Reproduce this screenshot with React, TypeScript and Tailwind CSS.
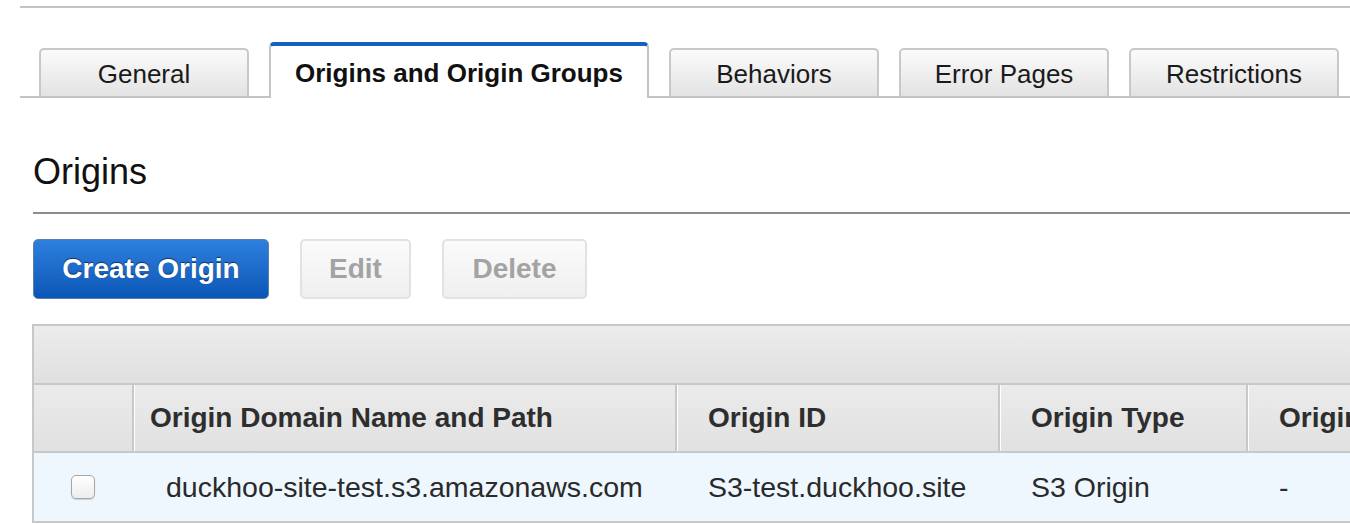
const tabs = [
  { label: 'General', active: false, width: 'w-[210px]' },
  { label: 'Origins and Origin Groups', active: true, width: 'w-[380px]' },
  { label: 'Behaviors', active: false, width: 'w-[210px]' },
  { label: 'Error Pages', active: false, width: 'w-[210px]' },
  { label: 'Restrictions', active: false, width: 'w-[210px]' },
];

function Tab({ label, active, width }: { label: string; active: boolean; width: string }) {
  if (active) {
    return (
      <div
        className={`${width} -mb-[2px] flex h-[56px] items-center justify-center rounded-t-[5px] border-x-2 border-t-4 border-x-[#c4c4c4] border-t-[#1461c0] bg-white pt-[2px] text-[26px] font-bold text-[#111]`}
      >
        {label}
      </div>
    );
  }
  return (
    <div
      className={`${width} flex h-[48px] items-center justify-center rounded-t-[5px] border-x-2 border-t-2 border-[#c8c8c8] bg-gradient-to-b from-[#fbfbfb] to-[#e3e3e3] pt-[2px] text-[26px] text-[#1a1a1a]`}
    >
      {label}
    </div>
  );
}

const cols = [
  { key: 'check', width: 'w-[98px]' },
  { key: 'domain', width: 'w-[543px]', head: 'Origin Domain Name and Path', headPad: 'pl-[16px]' },
  { key: 'id', width: 'w-[323px]', head: 'Origin ID', headPad: 'pl-[31px]' },
  { key: 'type', width: 'w-[248px]', head: 'Origin Type', headPad: 'pl-[31px]' },
  { key: 'path', width: 'w-[320px]', head: 'Origin Path', headPad: 'pl-[31px]' },
];

export default function App() {
  return (
    <div className="h-[524px] w-[1350px] overflow-hidden bg-white font-['Liberation_Sans',Arial,sans-serif]">
      <div className="pl-[20px] pt-[6px]">
        <div className="h-[2px] bg-[#c4c4c4]" />

        {/* Tab strip */}
        <div className="mt-[34px] flex items-end gap-[20px] border-b-2 border-[#c4c4c4] pl-[19px]">
          {tabs.map((t) => (
            <Tab key={t.label} {...t} />
          ))}
        </div>

        <div className="pl-[12px]">
          <h2 className="mt-[54px] pl-[1px] text-[36px] leading-[40px] text-[#111]">Origins</h2>
          <div className="ml-[1px] mt-[20px] h-[2px] bg-[#8c8c8c]" />

          {/* Actions */}
          <div className="mt-[25px] flex gap-[31px] pl-[1px]">
            <button className="h-[60px] w-[236px] rounded-[5px] border border-[#5f7ea6] bg-gradient-to-b from-[#2e80de] to-[#0a56b6] text-[28px] font-bold text-white [text-shadow:0_-1px_1px_rgba(0,0,0,0.55)]">
              Create Origin
            </button>
            <button className="h-[60px] w-[111px] rounded-[5px] border-2 border-[#e2e2e2] bg-gradient-to-b from-[#fbfbfb] to-[#efefef] text-[28px] font-bold text-[#a3a3a3]">
              Edit
            </button>
            <button className="h-[60px] w-[145px] rounded-[5px] border-2 border-[#e2e2e2] bg-gradient-to-b from-[#fbfbfb] to-[#efefef] text-[28px] font-bold text-[#a3a3a3]">
              Delete
            </button>
          </div>

          {/* Origins table */}
          <div className="mt-[25px] w-[1560px] border-l-2 border-t-2 border-[#c8c8c8]">
            <div className="h-[59px] border-b-2 border-[#c8c8c8] bg-gradient-to-b from-[#ececec] to-[#e0e0e0]" />
            <div className="flex h-[68px] border-b-2 border-[#c8c8c8] bg-gradient-to-b from-[#ebebeb] to-[#e1e1e1]">
              {cols.map((c, i) => (
                <div
                  key={c.key}
                  className={`${c.width} flex items-center ${i > 0 ? 'border-l-2 border-[#c8c8c8] shadow-[inset_1px_0_0_#ffffff]' : ''} ${c.headPad ?? ''} text-[28px] font-bold text-[#2e2e2e]`}
                >
                  {c.head}
                </div>
              ))}
            </div>
            <div className="flex h-[70px] items-center border-b-2 border-[#c8c8c8] bg-[#eef7fd] text-[28.5px] text-[#2a2a2a]">
              <div className="flex w-[98px] items-center pl-[37px]">
                <span className="h-[24px] w-[24px] rounded-[5px] border border-[#a6a6a6] bg-gradient-to-b from-white to-[#ededed] shadow-[0_1px_1px_rgba(0,0,0,0.15)]" />
              </div>
              <div className="w-[543px] pl-[34px]">duckhoo-site-test.s3.amazonaws.com</div>
              <div className="w-[323px] pl-[33px]">S3-test.duckhoo.site</div>
              <div className="w-[248px] pl-[33px]">S3 Origin</div>
              <div className="w-[320px] pl-[33px]">-</div>
            </div>
          </div>
        </div>
      </div>
    </div>
  );
}
